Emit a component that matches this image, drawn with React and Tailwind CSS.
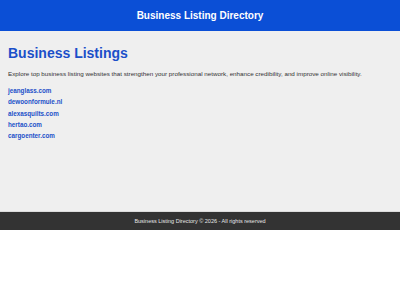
export default function App() {
  const links = [
    "jeanglass.com",
    "dewoonformule.nl",
    "alexasquilts.com",
    "hertao.com",
    "cargoenter.com",
  ];

  return (
    <div className="w-[400px] h-[300px] bg-white font-['Liberation_Sans',Arial,sans-serif]">
      <header className="h-[31px] bg-[#0b4fd6] flex items-center justify-center">
        <h1 className="text-white font-bold text-[10px]">Business Listing Directory</h1>
      </header>

      <main className="h-[180px] bg-[#efefef] px-2 pt-[13px]">
        <h2 className="text-[#1b4fc9] font-bold text-[14px] leading-[18px]">Business Listings</h2>
        <p className="mt-[7px] text-[6.25px] leading-[9px] text-[#333]">
          Explore top business listing websites that strengthen your professional network, enhance credibility, and improve online visibility.
        </p>
        <ul className="mt-[7px]">
          {links.map((l) => (
            <li key={l} className="h-[11.3px] flex items-center">
              <a href="#" className="text-[#1b4fc9] font-bold text-[6.3px]">
                {l}
              </a>
            </li>
          ))}
        </ul>
      </main>

      <footer className="h-[19px] bg-[#333] border-t border-[#dcdcdc] flex items-center justify-center">
        <p className="text-[#e6e6e6] text-[5.5px]">Business Listing Directory © 2026 - All rights reserved</p>
      </footer>
    </div>
  );
}
